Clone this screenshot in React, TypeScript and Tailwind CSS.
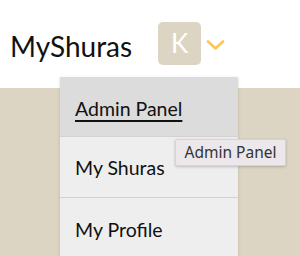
export default function App() {
  return (
    <div className="relative w-[300px] h-[256px] overflow-hidden bg-[#ddd5c3]" style={{ fontFamily: "Lato, 'Noto Sans', sans-serif" }}>
      <header className="h-[88px] bg-white flex items-center pl-[10px] pb-[2px]">
        <span className="text-[28px] text-[#111] leading-none mt-[6px]">MyShuras</span>
        <div className="ml-[26px] w-[43px] h-[43px] rounded-[5px] bg-[#ddd5c3] flex items-center justify-center text-white text-[26px] leading-none">K</div>
        <svg className="ml-[5px] mt-[3px]" width="19" height="12" viewBox="0 0 19 12">
          <path d="M2 2.5 L9.5 9.5 L17 2.5" fill="none" stroke="#fcc65a" strokeWidth="2.6" strokeLinecap="round" strokeLinejoin="round" />
        </svg>
      </header>
      <div className="absolute left-[60px] top-[77px] w-[178px] bg-[#eeeeee] shadow-[0_1px_3px_rgba(0,0,0,0.15)]">
        <div className="h-[60px] bg-[#dcdcdc] flex items-center pl-[15px] pt-[4px] border-b border-[#d2d2d2]">
          <span className="text-[19.5px] text-[#111] underline underline-offset-[4px] decoration-[2px]">Admin Panel</span>
        </div>
        <div className="h-[61px] flex items-center pl-[15px] pt-[2px] border-b border-[#d2d2d2]">
          <span className="text-[19.5px] text-[#111]">My Shuras</span>
        </div>
        <div className="h-[61px] flex items-center pl-[15px] pt-[2px]">
          <span className="text-[19.5px] text-[#111]">My Profile</span>
        </div>
      </div>
      <div className="absolute left-[175px] top-[139px] w-[111px] h-[27px] bg-[#ebe7eb] border border-[#d6d2d6] rounded-[2px] shadow-[0_1px_3px_rgba(0,0,0,0.2)] flex items-center justify-center text-[15.5px] text-[#333]" style={{ fontFamily: "'Noto Sans', sans-serif" }}>
        Admin Panel
      </div>
    </div>
  );
}
